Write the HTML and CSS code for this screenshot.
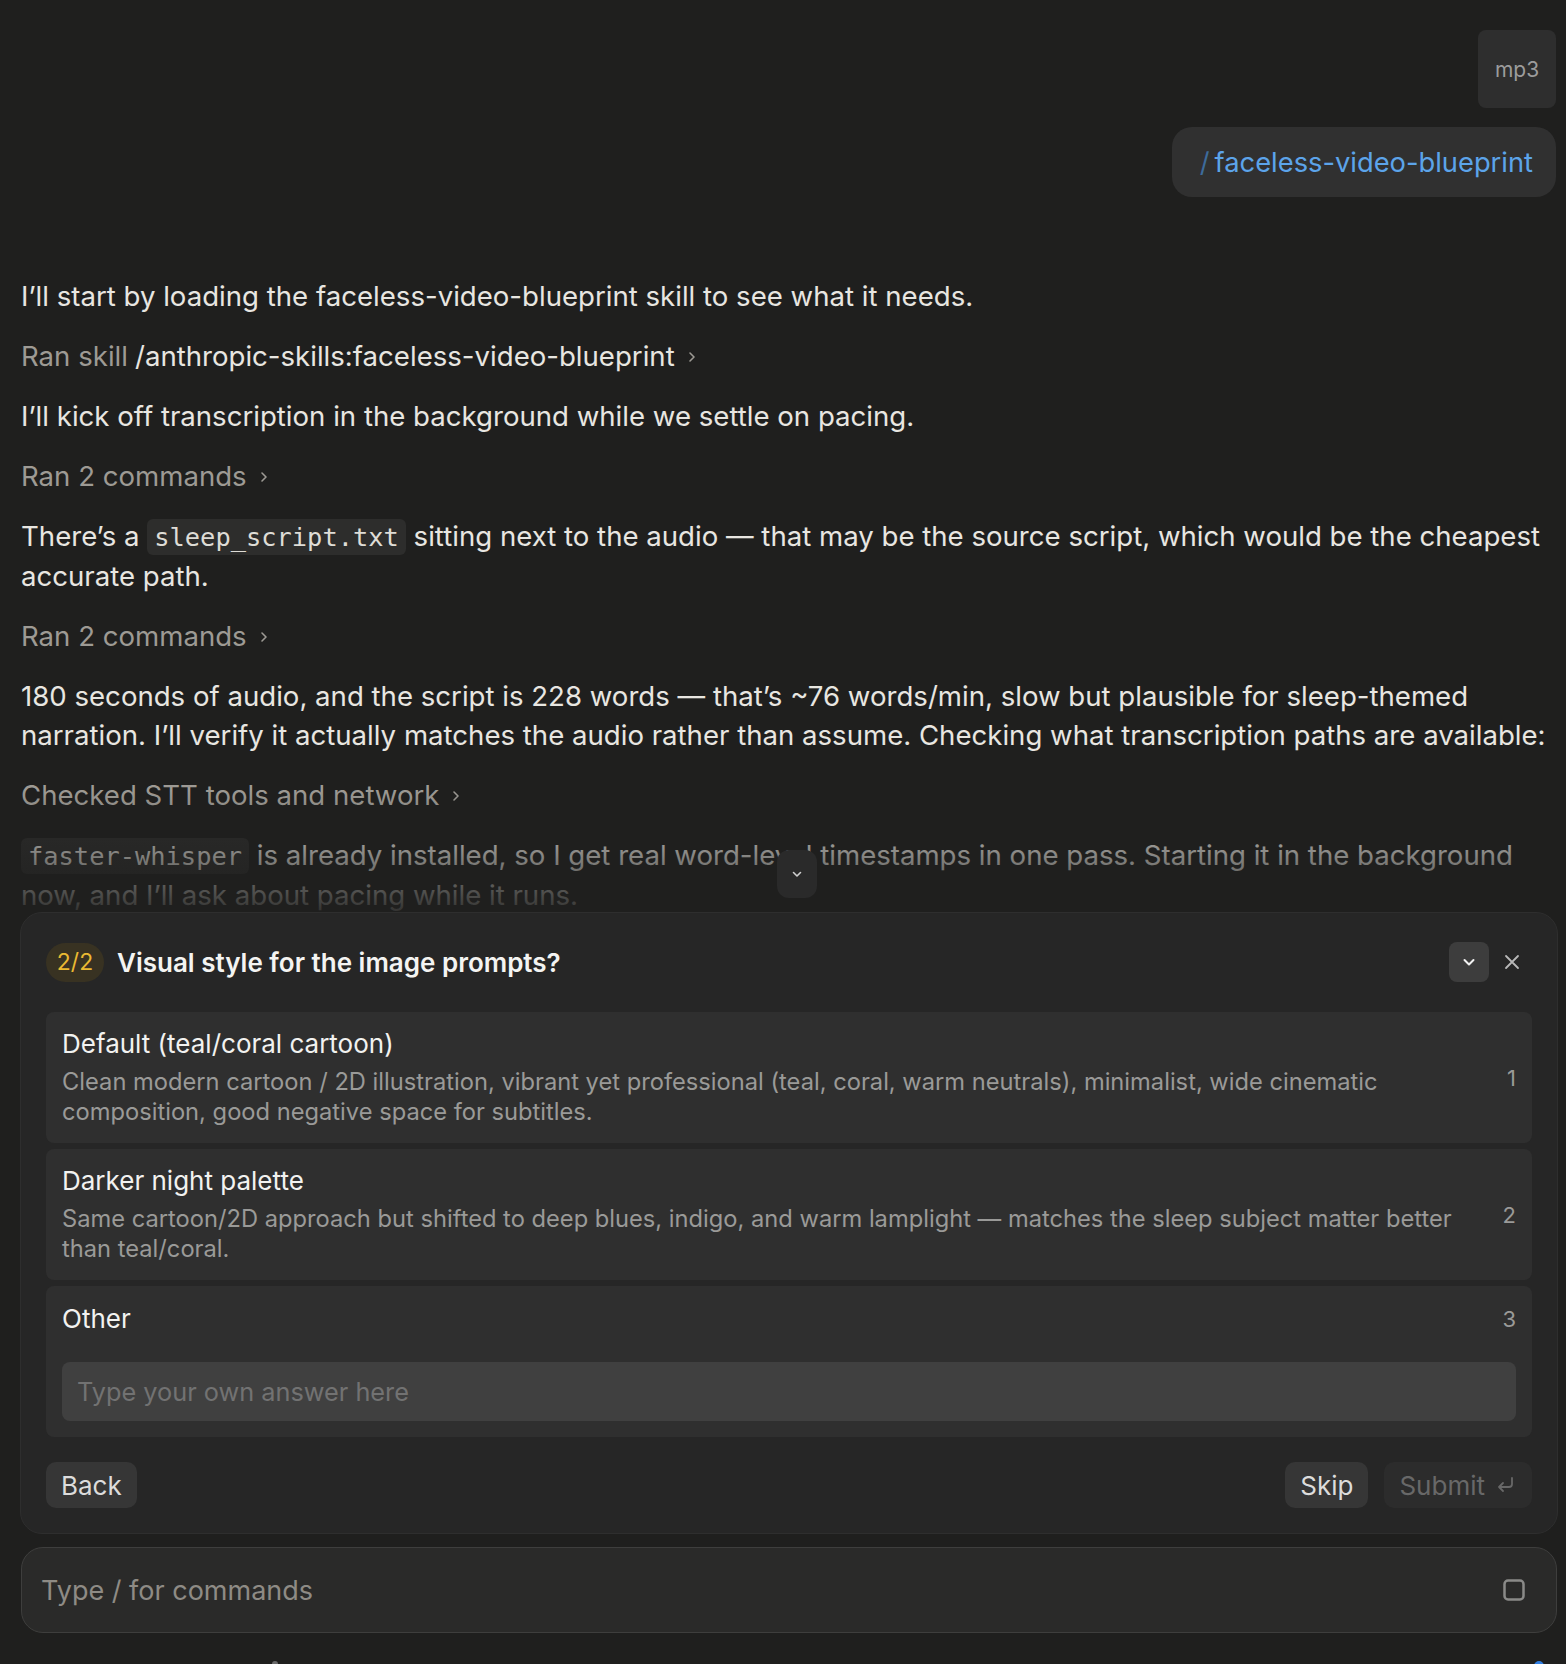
FILE: index.html
```html
<!DOCTYPE html>
<html lang="en">
<head>
<meta charset="utf-8">
<title>Claude</title>
<link rel="stylesheet" href="styles.css">
</head>
<body>
<div class="app">
  <main class="thread">
    <div class="user-col">
      <div class="file-chip">mp3</div>
      <div class="cmd-bubble"><span class="slash">/</span>faceless-video-blueprint</div>
    </div>
    <div class="assistant">
      <p>I’ll start by loading the faceless-video-blueprint skill to see what it needs.</p>
      <div class="tool">Ran skill <span class="tool-target">/anthropic-skills:faceless-video-blueprint</span><svg class="chev" viewBox="0 0 10 14" width="10" height="14"><path d="M3 3l4 4-4 4"/></svg></div>
      <p>I’ll kick off transcription in the background while we settle on pacing.</p>
      <div class="tool">Ran 2 commands<svg class="chev" viewBox="0 0 10 14" width="10" height="14"><path d="M3 3l4 4-4 4"/></svg></div>
      <p>There’s a <code>sleep_script.txt</code> sitting next to the audio — that may be the source script, which would be the cheapest accurate path.</p>
      <div class="tool">Ran 2 commands<svg class="chev" viewBox="0 0 10 14" width="10" height="14"><path d="M3 3l4 4-4 4"/></svg></div>
      <p>180 seconds of audio, and the script is 228 words — that’s ~76 words/min, slow but plausible for sleep-themed narration. I’ll verify it actually matches the audio rather than assume. Checking what transcription paths are available:</p>
      <div class="tool">Checked STT tools and network<svg class="chev" viewBox="0 0 10 14" width="10" height="14"><path d="M3 3l4 4-4 4"/></svg></div>
      <p><code>faster-whisper</code> is already installed, so I get real word-level timestamps in one pass. Starting it in the background now, and I’ll ask about pacing while it runs.</p>
    </div>
    <div class="fade"></div>
    <button class="scroll-down" aria-label="Scroll down"><svg viewBox="0 0 16 16" width="16" height="16"><path d="M4.5 6.5l3.5 3.5 3.5-3.5"/></svg></button>
  </main>

  <section class="ask">
    <header class="ask-head">
      <span class="step">2/2</span>
      <h2 class="ask-title">Visual style for the image prompts?</h2>
      <button class="icon-btn collapse" aria-label="Collapse"><svg viewBox="0 0 16 16" width="16" height="16"><path d="M3.5 6l4.5 4.5 4.5-4.5"/></svg></button>
      <button class="icon-btn close" aria-label="Close"><svg viewBox="0 0 16 16" width="16" height="16"><path d="M2 2l12 12M14 2L2 14"/></svg></button>
    </header>

    <div class="options">
      <div class="option">
        <div class="opt-text">
          <div class="opt-title">Default (teal/coral cartoon)</div>
          <div class="opt-desc">Clean modern cartoon / 2D illustration, vibrant yet professional (teal, coral, warm neutrals), minimalist, wide cinematic composition, good negative space for subtitles.</div>
        </div>
        <span class="opt-num">1</span>
      </div>
      <div class="option">
        <div class="opt-text">
          <div class="opt-title">Darker night palette</div>
          <div class="opt-desc">Same cartoon/2D approach but shifted to deep blues, indigo, and warm lamplight — matches the sleep subject matter better than teal/coral.</div>
        </div>
        <span class="opt-num">2</span>
      </div>
      <div class="option other">
        <div class="opt-row">
          <div class="opt-title">Other</div>
          <span class="opt-num">3</span>
        </div>
        <div class="other-input">Type your own answer here</div>
      </div>
    </div>

    <footer class="ask-foot">
      <button class="btn">Back</button>
      <span class="spacer"></span>
      <button class="btn">Skip</button>
      <button class="btn submit">Submit<svg viewBox="0 0 24 24" width="24" height="24"><path d="M19 5v6a3 3 0 0 1-3 3H6M10 10l-4 4 4 4"/></svg></button>
    </footer>
  </section>

  <div class="composer">
    <span class="composer-ph">Type / for commands</span>
    <svg class="stop" viewBox="0 0 24 24" width="24" height="24"><rect x="2.5" y="2.5" width="19" height="19" rx="3.5"/></svg>
  </div>
  <div class="bottom-row"><span class="dot-gray"></span><span class="dot-blue"></span></div>
</div>
</body>
</html>
```

FILE: styles.css
```css
* { box-sizing: border-box; margin: 0; padding: 0; }

html, body { height: 100%; }

body {
  background: #1f1f1e;
  color: #e8e6e1;
  font-family: Inter, "Noto Sans", sans-serif;
  overflow: hidden;
}

button { font: inherit; border: none; background: none; color: inherit; cursor: pointer; }

.app {
  height: 1664px;
  display: flex;
  flex-direction: column;
  padding: 0 8px 0 20px;
}

/* ---------- thread ---------- */
.thread {
  position: relative;
  flex: none;
  height: 912px;
  overflow: hidden;
  padding: 30px 2px 0 1px;
}

.user-col {
  display: flex;
  flex-direction: column;
  align-items: flex-end;
  gap: 19px;
}

.file-chip {
  width: 78px;
  height: 78px;
  border-radius: 8px;
  background: #2e2e2e;
  color: #9c9c9c;
  font-size: 21px;
  display: flex;
  align-items: center;
  justify-content: center;
}

.cmd-bubble {
  height: 70px;
  padding: 0 23px 0 28px;
  border-radius: 20px;
  background: #303030;
  color: #5ca4ea;
  font-size: 27.3px;
  display: flex;
  align-items: center;
}

.slash { color: #3d6b9b; margin-right: 5px; }

.assistant {
  margin-top: 80px;
  display: flex;
  flex-direction: column;
  gap: 21px;
  font-size: 27.6px;
  line-height: 39px;
}

.tool {
  color: #9d9a94;
  display: flex;
  align-items: center;
}

.tool-target { color: #e8e6e1; margin-left: 7px; }

.chev {
  margin-left: 12px;
  fill: none;
  stroke: #9d9a94;
  stroke-width: 1.6;
  stroke-linecap: round;
  stroke-linejoin: round;
}

code {
  font-family: "DejaVu Sans Mono", "Liberation Mono", monospace;
  font-size: 25.4px;
  color: #dedcd6;
  background: #2d2d2c;
  border-radius: 6px;
  padding: 3px 7px;
}

.fade {
  position: absolute;
  left: 0;
  right: 0;
  bottom: 0;
  height: 122px;
  background: linear-gradient(to bottom, rgba(31,31,30,0) 0%, rgba(31,31,30,0.9) 100%);
  pointer-events: none;
}

.scroll-down {
  position: absolute;
  left: 757px;
  top: 850px;
  width: 40px;
  height: 48px;
  border-radius: 12px;
  background: #2a2a2a;
  display: flex;
  align-items: center;
  justify-content: center;
}

.scroll-down svg {
  fill: none;
  stroke: #cfcfcf;
  stroke-width: 1.6;
  stroke-linecap: round;
  stroke-linejoin: round;
}

/* ---------- ask card ---------- */
.ask {
  flex: none;
  height: 622px;
  background: #262626;
  border: 1px solid #2e2e2e;
  border-radius: 22px;
  padding: 29px 25px 0 25px;
  display: flex;
  flex-direction: column;
}

.ask-head {
  display: flex;
  align-items: center;
  height: 40px;
}

.step {
  height: 39px;
  width: 58px;
  border-radius: 20px;
  background: #383222;
  color: #eab932;
  font-size: 23px;
  display: flex;
  align-items: center;
  justify-content: center;
}

.ask-title {
  margin-left: 13px;
  flex: 1;
  font-size: 26px;
  font-weight: 600;
  color: #f4f4f2;
}

.icon-btn {
  display: flex;
  align-items: center;
  justify-content: center;
}

.icon-btn svg {
  fill: none;
  stroke-linecap: round;
  stroke-linejoin: round;
}

.collapse {
  width: 40px;
  height: 40px;
  border-radius: 8px;
  background: #3d3d3d;
}

.collapse svg { stroke: #f2f2f2; stroke-width: 2; }

.close {
  width: 28px;
  height: 28px;
  margin-left: 9px;
  margin-right: 6px;
}

.close svg { stroke: #b8b8b8; stroke-width: 1.8; }

.options {
  margin-top: 30px;
  display: flex;
  flex-direction: column;
  gap: 6px;
}

.option {
  background: #2f2f2f;
  border-radius: 8px;
  padding: 16px 16px;
  display: flex;
  align-items: center;
  gap: 30px;
}

.opt-text { flex: 1; }

.opt-title {
  font-size: 26px;
  line-height: 32px;
  color: #f2f2f0;
}

.opt-desc {
  margin-top: 7px;
  font-size: 23.7px;
  line-height: 30px;
  color: #9a9a98;
}

.opt-num {
  width: 20px;
  text-align: right;
  font-size: 22px;
  color: #9a9a98;
}

.option.other {
  flex-direction: column;
  align-items: stretch;
  gap: 0;
  padding-top: 17px;
}

.opt-row {
  display: flex;
  align-items: center;
  justify-content: space-between;
}

.other-input {
  margin-top: 27px;
  height: 59px;
  border-radius: 8px;
  background: #404040;
  color: #727272;
  font-size: 25.3px;
  padding-left: 15px;
  display: flex;
  align-items: center;
}

.ask-foot {
  margin-top: 25px;
  display: flex;
  align-items: center;
  gap: 16px;
}

.spacer { flex: 1; }

.btn {
  height: 46px;
  padding: 0 15px;
  border-radius: 10px;
  background: #363636;
  color: #dcdcdc;
  font-size: 26px;
  display: flex;
  align-items: center;
}

.btn.submit {
  background: #2c2c2c;
  color: #686868;
  gap: 8px;
}

.submit svg {
  fill: none;
  stroke: #686868;
  stroke-width: 1.8;
  stroke-linecap: round;
  stroke-linejoin: round;
}

/* ---------- composer ---------- */
.composer {
  flex: none;
  margin: 13px 1px 0 1px;
  height: 86px;
  border: 1.5px solid #3e3e3d;
  border-radius: 22px;
  background: #2a2a29;
  display: flex;
  align-items: center;
  padding: 0 30px 0 19px;
}

.composer-ph {
  flex: 1;
  font-size: 27px;
  color: #8e8b85;
}

.stop {
  fill: none;
  stroke: #8a8a88;
  stroke-width: 2.5;
}

.bottom-row {
  display: flex;
  justify-content: space-between;
  padding: 28px 14px 0 252px;
}

.dot-gray { width: 6px; height: 6px; border-radius: 50%; background: #6a6a6a; }
.dot-blue { width: 10px; height: 10px; border-radius: 50%; background: #2f7de1; }
```
